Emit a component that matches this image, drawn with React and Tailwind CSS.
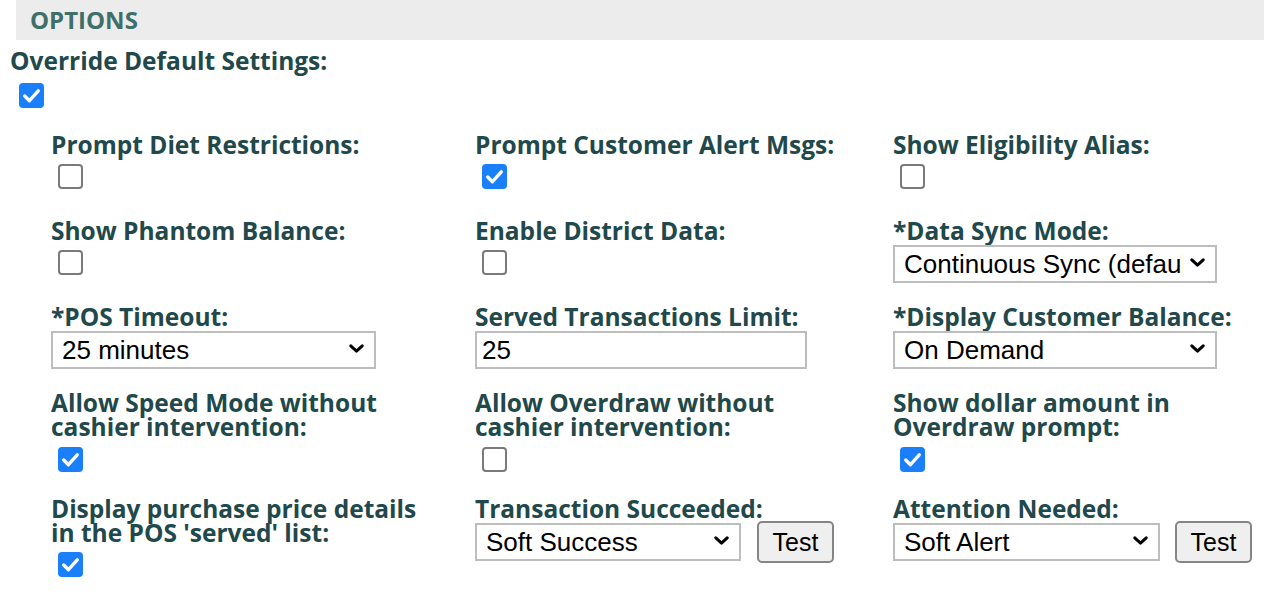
import React from 'react';

const labelCls = "block text-[24.5px] leading-[24px] font-bold text-[#21484a]";

const CheckIcon = () => (
  <svg viewBox="0 0 24 24" className="absolute inset-0 w-full h-full pointer-events-none" fill="none">
    <path d="M5.5 12.5 L10 17 L18.5 7.5" stroke="white" strokeWidth="3.2" strokeLinecap="round" strokeLinejoin="round" />
  </svg>
);

const Check = ({ checked, className = "" }) => (
  <span className={`relative block w-[25px] h-[25px] ml-[7px] ${className}`}>
    <input
      type="checkbox"
      defaultChecked={checked}
      className={
        checked
          ? "appearance-none block w-[25px] h-[25px] rounded-[4px] bg-[#1a7ffa] m-0"
          : "appearance-none block w-[25px] h-[25px] rounded-[4px] border-2 border-[#7a7a7a] bg-white m-0"
      }
    />
    {checked && <CheckIcon />}
  </span>
);

const Chevron = () => (
  <svg viewBox="0 0 15 9" className="absolute right-[12px] top-[13px] w-[15px] h-[9px] pointer-events-none" fill="none">
    <path d="M1.8 1.8 L7.5 7.2 L13.2 1.8" stroke="black" strokeWidth="3" strokeLinecap="round" strokeLinejoin="round" />
  </svg>
);

const Select = ({ value, width, className = "" }) => (
  <div className={`relative mt-[2px] ${className}`} style={{ width }}>
    <select
      defaultValue={value}
      className="appearance-none block w-full h-[38px] border-2 border-[#bdbdbd] bg-white pl-[9px] pr-[32px] text-[26px] leading-[34px] text-black font-['Liberation_Sans',Arial,sans-serif] rounded-none outline-none"
    >
      <option>{value}</option>
    </select>
    <Chevron />
  </div>
);

const TestButton = () => (
  <button className="h-[42px] w-[77px] rounded-[5px] border-2 border-[#858585] bg-[#efefef] text-[25px] text-black font-['Liberation_Sans',Arial,sans-serif] leading-none">
    Test
  </button>
);

const Cell = ({ label, children }) => (
  <div className="flex flex-col items-start">
    <label className={labelCls}>{label}</label>
    {children}
  </div>
);

export default function App() {
  return (
    <div className="w-[1264px] h-[604px] overflow-hidden bg-white font-['Open_Sans','Lato',sans-serif]">
      <div className="ml-4 h-10 bg-[#ececec] pl-[14px] flex items-center">
        <h2 className="text-[24px] font-bold text-[#3e6f68] leading-none">OPTIONS</h2>
      </div>

      <div className="pl-[10px] pt-[9px]">
        <label className={labelCls}>Override Default Settings:</label>
        <Check checked className="ml-[9px] mt-[10px]" />
      </div>

      <div className="grid grid-cols-[424px_418px_1fr] gap-y-[21px] pl-[51px] mt-[25px]">
        <Cell label="Prompt Diet Restrictions:">
          <Check className="mt-[7px] mb-[9px]" />
        </Cell>
        <Cell label="Prompt Customer Alert Msgs:">
          <Check checked className="mt-[7px] mb-[9px]" />
        </Cell>
        <Cell label="Show Eligibility Alias:">
          <Check className="mt-[7px] mb-[9px]" />
        </Cell>

        <Cell label="Show Phantom Balance:">
          <Check className="mt-[7px] mb-[4px]" />
        </Cell>
        <Cell label="Enable District Data:">
          <Check className="mt-[7px] mb-[4px]" />
        </Cell>
        <Cell label="*Data Sync Mode:">
          <Select value="Continuous Sync (default)" width="324px" className="mb-[1px]" />
        </Cell>

        <Cell label="*POS Timeout:">
          <Select value="25 minutes" width="325px" className="mb-[1px]" />
        </Cell>
        <Cell label="Served Transactions Limit:">
          <input
            type="text"
            defaultValue="25"
            className="mt-[2px] mb-[1px] block w-[332px] h-[38px] border-2 border-[#bdbdbd] bg-white pl-[5px] text-[26px] text-black font-['Liberation_Sans',Arial,sans-serif] outline-none"
          />
        </Cell>
        <Cell label="*Display Customer Balance:">
          <Select value="On Demand" width="324px" className="mb-[1px]" />
        </Cell>

        <Cell label={<>Allow Speed Mode without<br />cashier intervention:</>}>
          <Check checked className="mt-[8px] mb-[4px]" />
        </Cell>
        <Cell label={<>Allow Overdraw without<br />cashier intervention:</>}>
          <Check className="mt-[8px] mb-[4px]" />
        </Cell>
        <Cell label={<>Show dollar amount in<br />Overdraw prompt:</>}>
          <Check checked className="mt-[8px] mb-[4px]" />
        </Cell>

        <Cell label={<>Display purchase price details<br />in the POS 'served' list:</>}>
          <Check checked className="mt-[7px]" />
        </Cell>
        <Cell label="Transaction Succeeded:">
          <div className="flex items-start gap-4">
            <Select value="Soft Success" width="266px" />
            <TestButton />
          </div>
        </Cell>
        <Cell label="Attention Needed:">
          <div className="flex items-start gap-[15px]">
            <Select value="Soft Alert" width="267px" />
            <TestButton />
          </div>
        </Cell>
      </div>
    </div>
  );
}
